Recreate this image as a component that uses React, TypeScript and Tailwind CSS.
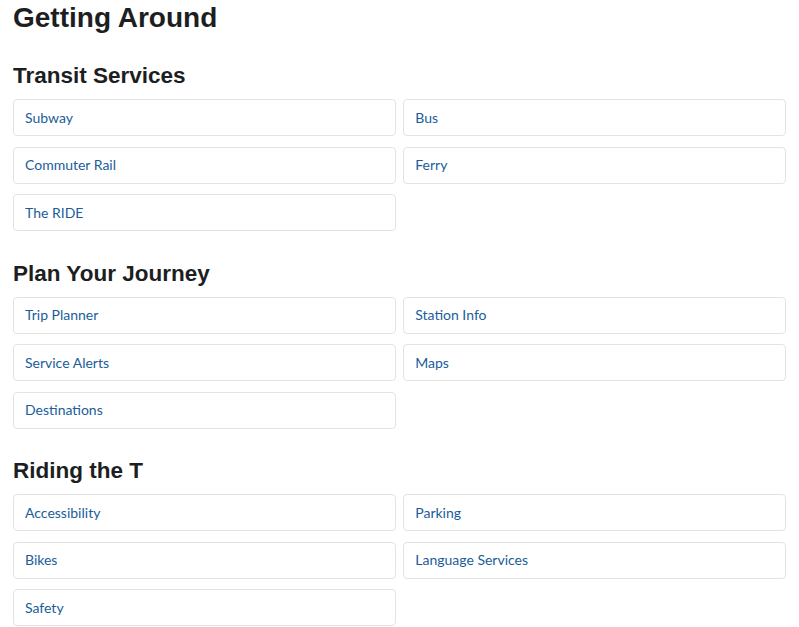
import React from "react";

const sections: { title: string; items: string[] }[] = [
  { title: "Transit Services", items: ["Subway", "Bus", "Commuter Rail", "Ferry", "The RIDE"] },
  { title: "Plan Your Journey", items: ["Trip Planner", "Station Info", "Service Alerts", "Maps", "Destinations"] },
  { title: "Riding the T", items: ["Accessibility", "Parking", "Bikes", "Language Services", "Safety"] },
];

export default function App() {
  return (
    <div className="min-h-screen bg-white px-[13px] text-[#1c1e21]">
      <h1 className="text-[28px] leading-[36px] font-bold font-['Liberation_Sans',Arial,sans-serif]">
        Getting Around
      </h1>
      {sections.map((s, i) => (
        <section key={s.title} className={i === 0 ? "mt-[27px]" : "mt-[29.5px]"}>
          <h2 className="text-[22.5px] leading-[26px] font-bold font-['Liberation_Sans',Arial,sans-serif]">
            {s.title}
          </h2>
          <ul className="mt-[10px] grid grid-cols-2 gap-x-[7.5px] gap-y-[10.5px]">
            {s.items.map((it) => (
              <li key={it}>
                <a
                  href="#"
                  className="flex h-[37px] items-center rounded-[4px] border border-[#e3e3e3] px-[11px] pb-[1px] text-[14px] text-[#1a5d9a] font-['Lato',sans-serif]"
                >
                  {it}
                </a>
              </li>
            ))}
          </ul>
        </section>
      ))}
    </div>
  );
}
